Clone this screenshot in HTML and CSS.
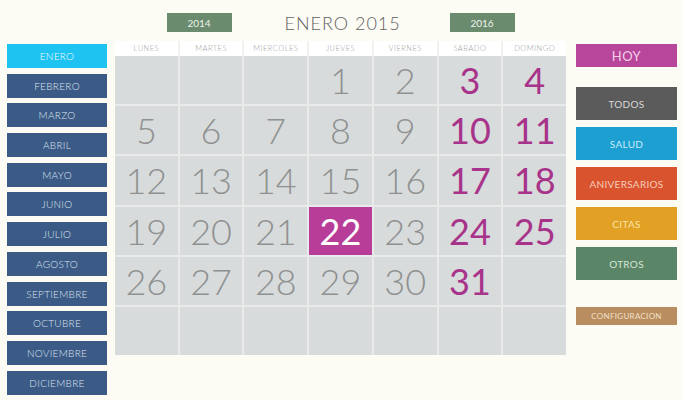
FILE: index.html
```html
<!DOCTYPE html>
<html lang="es">
<head>
<meta charset="utf-8">
<title>Calendario Enero 2015</title>
<link rel="stylesheet" href="styles.css">
</head>
<body>
<div class="page">
  <nav class="months">
    <div class="month active">ENERO</div>
    <div class="month">FEBRERO</div>
    <div class="month">MARZO</div>
    <div class="month">ABRIL</div>
    <div class="month">MAYO</div>
    <div class="month">JUNIO</div>
    <div class="month">JULIO</div>
    <div class="month">AGOSTO</div>
    <div class="month">SEPTIEMBRE</div>
    <div class="month">OCTUBRE</div>
    <div class="month">NOVIEMBRE</div>
    <div class="month">DICIEMBRE</div>
  </nav>

  <main class="cal">
    <div class="top">
      <div class="year">2014</div>
      <div class="title">ENERO 2015</div>
      <div class="year">2016</div>
    </div>
    <div class="weekdays">
      <div>LUNES</div><div>MARTES</div><div>MIERCOLES</div><div>JUEVES</div><div>VIERNES</div><div>SABADO</div><div>DOMINGO</div>
    </div>
    <div class="grid">
      <div class="cell"></div><div class="cell"></div><div class="cell"></div>
      <div class="cell">1</div><div class="cell">2</div><div class="cell we">3</div><div class="cell we">4</div>
      <div class="cell">5</div><div class="cell">6</div><div class="cell">7</div><div class="cell">8</div><div class="cell">9</div><div class="cell we">10</div><div class="cell we">11</div>
      <div class="cell">12</div><div class="cell">13</div><div class="cell">14</div><div class="cell">15</div><div class="cell">16</div><div class="cell we">17</div><div class="cell we">18</div>
      <div class="cell">19</div><div class="cell">20</div><div class="cell">21</div><div class="cell today">22</div><div class="cell">23</div><div class="cell we">24</div><div class="cell we">25</div>
      <div class="cell">26</div><div class="cell">27</div><div class="cell">28</div><div class="cell">29</div><div class="cell">30</div><div class="cell we">31</div><div class="cell"></div>
      <div class="cell"></div><div class="cell"></div><div class="cell"></div><div class="cell"></div><div class="cell"></div><div class="cell"></div><div class="cell"></div>
    </div>
  </main>

  <aside class="side">
    <div class="btn hoy">HOY</div>
    <div class="filters">
      <div class="btn todos">TODOS</div>
      <div class="btn salud">SALUD</div>
      <div class="btn aniv">ANIVERSARIOS</div>
      <div class="btn citas">CITAS</div>
      <div class="btn otros">OTROS</div>
    </div>
    <div class="btn config">CONFIGURACION</div>
  </aside>
</div>
</body>
</html>
```

FILE: styles.css
```css
html, body {
  margin: 0;
  padding: 0;
  background: #fcfcf5;
  font-family: Lato, "Liberation Sans", sans-serif;
}

.page {
  display: flex;
  padding-left: 7px;
  width: 683px;
  height: 400px;
  box-sizing: border-box;
}

/* months */
.months {
  width: 100px;
  margin-top: 44px;
  display: flex;
  flex-direction: column;
  gap: 5.7px;
}
.month {
  height: 24px;
  background: #3b5b86;
  color: #dbe4f0;
  font-size: 10px;
  font-weight: 300;
  letter-spacing: 0.3px;
  display: flex;
  align-items: center;
  justify-content: center;
}
.month.active {
  background: #1ec3f2;
  color: #f2fbff;
}

/* calendar */
.cal {
  width: 451px;
  margin-left: 8px;
  padding-top: 13px;
}
.top {
  height: 19px;
  display: flex;
  justify-content: center;
  align-items: center;
  gap: 53px;
}
.year {
  width: 65px;
  height: 19px;
  background: #6a8b6e;
  color: #eef3ec;
  font-size: 10px;
  display: flex;
  align-items: center;
  justify-content: center;
}
.title {
  width: 112px;
  text-align: center;
  font-size: 18px;
  font-weight: 300;
  letter-spacing: 1px;
  color: #616161;
  white-space: nowrap;
}
.weekdays {
  margin-top: 9px;
  height: 15px;
  display: grid;
  grid-template-columns: repeat(7, 1fr);
  gap: 2px;
  background: #f1f1ee;
}
.weekdays div {
  background: #ffffff;
  color: #a2a2a2;
  font-size: 7.5px;
  font-weight: 300;
  letter-spacing: 0.5px;
  display: flex;
  align-items: center;
  justify-content: center;
}
.grid {
  height: 299px;
  display: grid;
  grid-template-columns: repeat(7, 1fr);
  grid-template-rows: repeat(6, 1fr);
  gap: 2px;
  background: #e9ebea;
}
.cell {
  background: #d8dbdb;
  color: #8f9191;
  font-size: 36px;
  font-weight: 300;
  display: flex;
  align-items: center;
  justify-content: center;
}
.cell.we {
  color: #a8338a;
  font-weight: 400;
}
.cell.today {
  background: #b83d98;
  color: #ffffff;
  font-weight: 400;
}

/* right side */
.side {
  width: 101px;
  margin-left: 10px;
  margin-top: 44px;
  display: flex;
  flex-direction: column;
}
.btn {
  display: flex;
  align-items: center;
  justify-content: center;
  font-size: 10px;
  letter-spacing: 0.3px;
}
.hoy {
  height: 23px;
  background: #b8469b;
  color: #f3cfe9;
  font-size: 13px;
  letter-spacing: 0.5px;
}
.filters {
  margin-top: 20px;
  display: flex;
  flex-direction: column;
  gap: 7px;
}
.filters .btn { height: 33px; }
.todos { background: #5b5b5b; color: #d8d8d8; }
.salud { background: #1d9fd2; color: #c9ecfa; }
.aniv { background: #d9532f; color: #f7cdb8; }
.citas { background: #e2a025; color: #f8e4a6; }
.otros { background: #5b8567; color: #d5e6d8; }
.config {
  margin-top: 27px;
  height: 18px;
  background: #b98d5f;
  color: #f1e0cb;
  font-size: 8px;
}
```
